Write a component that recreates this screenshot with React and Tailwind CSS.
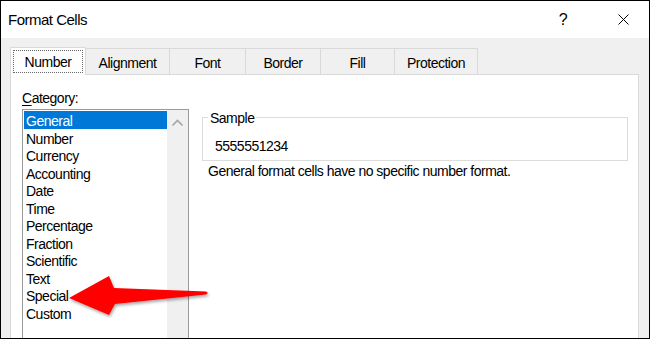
import React from "react";

const categories = [
  "General",
  "Number",
  "Currency",
  "Accounting",
  "Date",
  "Time",
  "Percentage",
  "Fraction",
  "Scientific",
  "Text",
  "Special",
  "Custom",
];

const tabs = [
  { label: "Alignment", w: "w-[84px]" },
  { label: "Font", w: "w-[76px]" },
  { label: "Border", w: "w-[75px]" },
  { label: "Fill", w: "w-[74px]" },
  { label: "Protection", w: "w-[83px]" },
];

export default function App() {
  return (
    <div className="relative flex h-[339px] w-[650px] flex-col overflow-hidden border border-black bg-[#f0f0f0] font-['Liberation_Sans',Arial,sans-serif] text-[14px] leading-[17px] tracking-[-0.5px] text-black">
      {/* title bar */}
      <div className="flex h-[37px] shrink-0 items-center bg-white pl-[7px] pr-[20px]">
        <span className="text-[15px]">Format Cells</span>
        <span className="ml-auto w-[14px] text-center text-[16px] font-light">?</span>
        <svg className="ml-[48px]" width="11" height="11" viewBox="0 0 11 11">
          <path d="M0.5 0.5 L10.5 10.5 M10.5 0.5 L0.5 10.5" stroke="#000" strokeWidth="1" fill="none" />
        </svg>
      </div>

      <div className="flex flex-1 flex-col pl-[9px] pr-[10px] pt-[9px]">
        {/* tabs */}
        <div className="flex items-end">
          <div className="relative z-10 -mb-px h-[28px] w-[76px] border-x border-t border-[#d9d9d9] bg-white px-[2px] pt-[2px]">
            <div className="h-[23px] border border-dotted border-[#666] pt-[3px] text-center">Number</div>
          </div>
          {tabs.map((t) => (
            <div key={t.label} className={`h-[26px] ${t.w} border-r border-t border-[#d9d9d9] pt-[6px] text-center`}>
              {t.label}
            </div>
          ))}
        </div>

        {/* panel */}
        <div className="flex flex-1 flex-col border border-[#d9d9d9] bg-white pl-[11px] pt-[15px]">
          <div>
            <span className="underline underline-offset-2">C</span>ategory:
          </div>
          <div className="mt-[2px] flex">
            <div className="flex h-[240px] w-[167px] border border-[#9a9a9a]">
              <div className="flex-1 pl-[1px] pt-[1px]">
                {categories.map((c, i) => (
                  <div
                    key={c}
                    className={`h-[17.5px] pl-[2px] leading-[20px] ${i === 0 ? "bg-[#0078d7] text-white" : ""}`}
                  >
                    {c}
                  </div>
                ))}
              </div>
              <div className="w-[21px] bg-[#f0f0f0]">
                <svg width="21" height="21" viewBox="0 0 21 21">
                  <path d="M5.5 15.5 L10.5 10.5 L15.5 15.5" stroke="#a6a6a6" strokeWidth="1.6" fill="none" />
                </svg>
              </div>
            </div>

            <div className="ml-[13px] mr-[10px] flex-1">
              <fieldset className="border border-[#dcdcdc]">
                <legend className="ml-[5px] px-[2px]">
                  <span className="relative top-[1px]">Sample</span>
                </legend>
                <div className="mt-[12px] pb-[5px] pl-[12px]">5555551234</div>
              </fieldset>
              <div className="mt-[2px] pl-[6px]">General format cells have no specific number format.</div>
            </div>
          </div>
        </div>
      </div>

      {/* red annotation arrow */}
      <svg className="pointer-events-none absolute left-0 top-0" width="650" height="339" viewBox="0 0 650 339">
        <defs>
          <filter id="sh" x="-20%" y="-50%" width="140%" height="200%">
            <feDropShadow dx="1" dy="2" stdDeviation="1.5" floodColor="#000" floodOpacity="0.35" />
          </filter>
        </defs>
        <polygon
          points="68,297 108,275 113,287 205,290.5 207,292 205,293.5 114,303 108,314"
          fill="#ff0000"
          filter="url(#sh)"
        />
      </svg>
    </div>
  );
}
